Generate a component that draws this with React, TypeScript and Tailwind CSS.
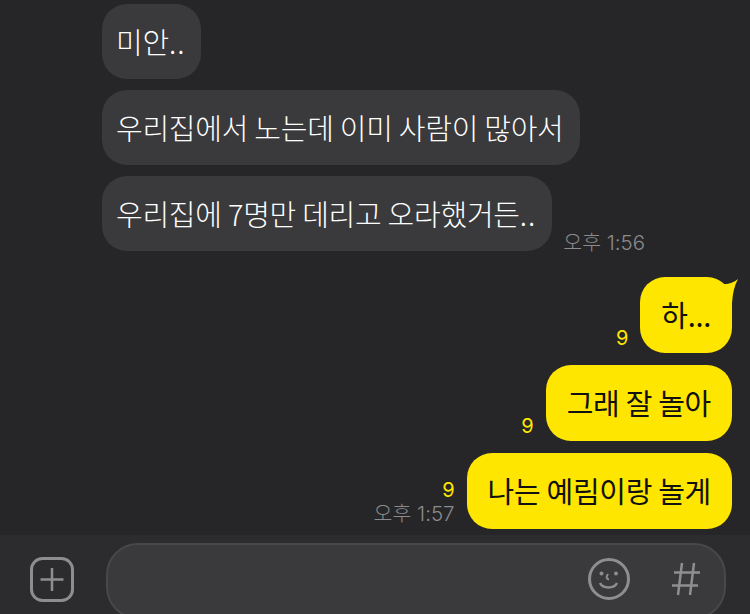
import type { ReactNode } from "react";

const font = { fontFamily: '"Noto Sans CJK KR", "Noto Sans", sans-serif' };
const metaFont = { fontFamily: 'Inter, "Noto Sans CJK KR", sans-serif' };

function Dots({ children }: { children: string }) {
  return <span className="tracking-[1px]">{children}</span>;
}

function Received({ children, time }: { children: ReactNode; time?: string }) {
  return (
    <div className="flex items-end">
      <div className="flex h-[75px] items-center rounded-[25px] bg-[#3a3a3c] pr-[16px] pl-[14px] text-[29px] font-light tracking-[-0.25px] whitespace-nowrap text-white">
        {children}
      </div>
      {time && (
        <span
          className="mb-[-4px] ml-[11px] text-[20.5px] leading-[24px] font-light text-[#8b8b8d]"
          style={metaFont}
        >
          {time}
        </span>
      )}
    </div>
  );
}

function Sent({
  children,
  time,
  tail,
}: {
  children: ReactNode;
  time?: string;
  tail?: boolean;
}) {
  return (
    <div className="flex items-end justify-end">
      <div className="mr-[12px] mb-[3px] flex flex-col items-end" style={metaFont}>
        <span className="text-[20px] leading-[24px] text-[#ffe600]">9</span>
        {time && (
          <span className="text-[20.5px] leading-[24px] font-light text-[#8b8b8d]">{time}</span>
        )}
      </div>
      <div className="relative flex h-[76px] items-center rounded-[25px] bg-[#ffe600] px-[21px] text-[29px] font-normal tracking-[-0.3px] whitespace-nowrap text-[#111]">
        {children}
        {tail && (
          <svg
            className="absolute top-0 right-[-6px]"
            width="24"
            height="28"
            viewBox="0 0 24 28"
            fill="#ffe600"
          >
            <path d="M8 7Q17 8 24 2Q19 11 18 26L4 26Z" />
          </svg>
        )}
      </div>
    </div>
  );
}

export default function App() {
  return (
    <div
      className="flex h-[614px] w-[750px] flex-col overflow-hidden bg-[#262628]"
      style={font}
    >
      <div className="flex-1 pt-[4px] pr-[18px] pl-[102px]">
        <div className="flex flex-col gap-[11px]">
          <Received>
            미안<Dots>..</Dots>
          </Received>
          <Received>우리집에서 노는데 이미 사람이 많아서</Received>
          <Received time="오후 1:56">
            우리집에 7명만 데리고 오라했거든<Dots>..</Dots>
          </Received>
        </div>
        <div className="mt-[26px] flex flex-col gap-[12px]">
          <Sent tail>하...</Sent>
          <Sent>그래 잘 놀아</Sent>
          <Sent time="오후 1:57">나는 예림이랑 놀게</Sent>
        </div>
      </div>

      <div className="flex h-[79px] shrink-0 items-start bg-[#2c2c2e] pt-[8px] pr-[24px] pl-[30px]">
        <svg className="mt-[14px]" width="44" height="45" viewBox="0 0 44 45" fill="none">
          <rect x="1.5" y="1.5" width="41" height="42" rx="11" stroke="#8e8e90" strokeWidth="3" />
          <path d="M22 11V34M10.500 22.500H33.500" stroke="#8e8e90" strokeWidth="2.500" />
        </svg>
        <div className="ml-[32px] flex h-[76px] flex-1 items-start justify-end rounded-[32px] border-2 border-[#48484a] bg-[#3a3a3c] pt-[13px] pr-[23px]">
          <svg width="44" height="42" viewBox="0 0 44 42" fill="none" stroke="#8e8e90">
            <circle cx="22" cy="21" r="19.500" strokeWidth="3" />
            <circle cx="14.500" cy="15.500" r="2" fill="#8e8e90" stroke="none" />
            <circle cx="29" cy="15.500" r="2" fill="#8e8e90" stroke="none" />
            <path d="M21 16C19 19 19 21 22 21.500" strokeWidth="2" />
            <path d="M13 25C16 31 27 31 30 25" strokeWidth="2.500" />
          </svg>
          <svg
            className="mt-[4px] ml-[40px]"
            width="30"
            height="34"
            viewBox="0 0 30 34"
            fill="none"
            stroke="#8e8e90"
            strokeWidth="2.500"
          >
            <path d="M11 1L7 33M23 1L19 33M3 10.500H29M1 23.500H27" />
          </svg>
        </div>
      </div>
    </div>
  );
}
